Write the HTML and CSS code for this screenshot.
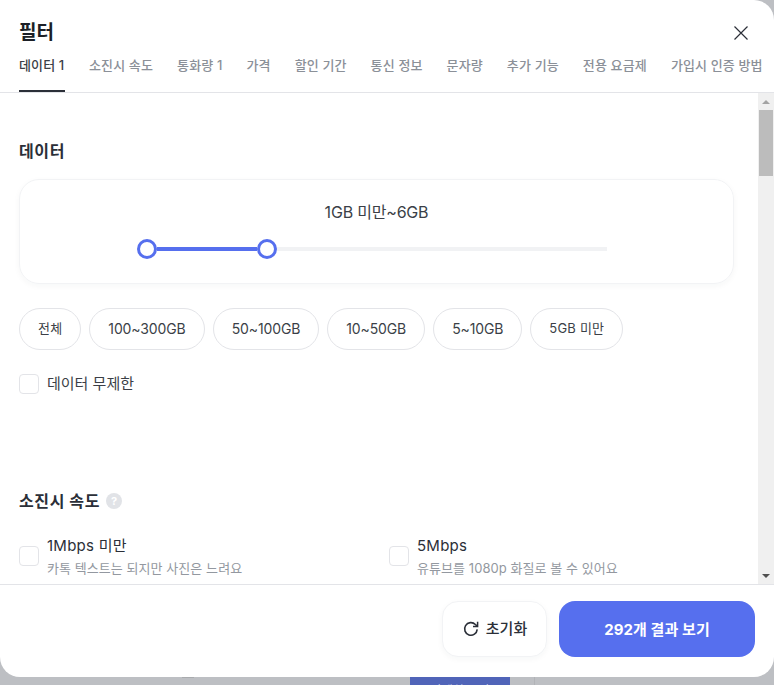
FILE: index.html
```html
<!DOCTYPE html>
<html lang="ko">
<head>
  <meta charset="UTF-8">
  <title>필터</title>
  <link rel="stylesheet" href="styles.css">
</head>
<body>
  <div class="modal">
    <header class="modal-head">
      <div class="title-row">
        <h1 class="title">필터</h1>
        <svg class="close" width="16" height="16" viewBox="0 0 16 16" fill="none" stroke="#2b2f38" stroke-width="1.2">
          <path d="M1.5 1.5L14.5 14.5M14.5 1.5L1.5 14.5"/>
        </svg>
      </div>
      <nav class="tabs">
        <span class="tab active">데이터 1</span>
        <span class="tab">소진시 속도</span>
        <span class="tab">통화량 1</span>
        <span class="tab">가격</span>
        <span class="tab">할인 기간</span>
        <span class="tab">통신 정보</span>
        <span class="tab">문자량</span>
        <span class="tab">추가 기능</span>
        <span class="tab">전용 요금제</span>
        <span class="tab">가입시 인증 방법</span>
      </nav>
    </header>

    <div class="body-wrap">
      <main class="content">
        <h2 class="section-title first">데이터</h2>
        <div class="range-card">
          <div class="range-label">1GB 미만~6GB</div>
          <div class="slider">
            <span class="knob"></span>
            <span class="fill"></span>
            <span class="knob"></span>
            <span class="rest"></span>
          </div>
        </div>
        <div class="chips">
          <span class="chip ko">전체</span>
          <span class="chip">100~300GB</span>
          <span class="chip">50~100GB</span>
          <span class="chip">10~50GB</span>
          <span class="chip">5~10GB</span>
          <span class="chip ko">5GB 미만</span>
        </div>
        <label class="check-row">
          <span class="box"></span>
          <span class="check-text">데이터 무제한</span>
        </label>

        <h2 class="section-title second">소진시 속도 <span class="help">?</span></h2>
        <div class="speed-grid">
          <div class="speed">
            <span class="box"></span>
            <div>
              <div class="speed-name">1Mbps 미만</div>
              <div class="speed-desc">카톡 텍스트는 되지만 사진은 느려요</div>
            </div>
          </div>
          <div class="speed">
            <span class="box"></span>
            <div>
              <div class="speed-name">5Mbps</div>
              <div class="speed-desc">유튜브를 1080p 화질로 볼 수 있어요</div>
            </div>
          </div>
        </div>
      </main>
      <div class="scrollbar">
        <span class="arrow up"></span>
        <span class="thumb"></span>
        <span class="track"></span>
        <span class="arrow down"></span>
      </div>
    </div>

    <footer class="modal-foot">
      <button class="btn-reset">
        <svg width="18" height="18" viewBox="0 0 18 18" fill="none" stroke="#2b2f38" stroke-width="1.6">
          <path d="M15.2 9.4A6.3 6.3 0 1 1 13.4 4.5L15.2 6.2"/>
          <path d="M15.6 1.8V6.4H11" stroke-width="1.5"/>
        </svg>
        <span class="reset-text">초기화</span>
      </button>
      <button class="btn-apply">292개 결과 보기</button>
    </footer>
  </div>

  <div class="behind">
    <span class="behind-mark"></span>
    <span class="behind-btn">자세히 보기</span>
  </div>
</body>
</html>
```

FILE: styles.css
```css
* {
  box-sizing: border-box;
}
html, body {
  height: 100%;
}
body {
  margin: 0;
  height: 685px;
  overflow: hidden;
  background-color: #bdbfc3;
  font-family: Inter, "Noto Sans CJK KR", sans-serif;
  color: #2b2f38;
}

/* Modal */
.modal {
  height: 677px;
  background-color: #fff;
  border-radius: 0 20px 20px 20px;
  display: flex;
  flex-direction: column;
  overflow: hidden;
}
.modal-head {
  height: 93px;
  flex: none;
  border-bottom: 1px solid #e3e4e8;
  padding: 0 12px 0 19px;
}
.title-row {
  display: flex;
  justify-content: space-between;
  align-items: center;
  padding: 14px 13px 0 0;
  height: 51px;
}
.title {
  margin: 0;
  font-size: 19px;
  line-height: 26px;
  font-weight: 700;
  color: #1c1f26;
}
.tabs {
  display: flex;
  gap: 24px;
  white-space: nowrap;
  font-size: 13px;
  letter-spacing: 0.13px;
  font-weight: 500;
  color: #8b9098;
}
.tab {
  height: 41px;
  padding-top: 3px;
  line-height: 22px;
}
.tab.active {
  min-width: 46px;
  color: #3b3f47;
  border-bottom: 2px solid #2b2f38;
}

/* Scroll area */
.body-wrap {
  flex: 1;
  min-height: 0;
  display: flex;
}
.content {
  flex: 1;
  min-width: 0;
  overflow: hidden;
  padding: 0 24px 0 19px;
}
.scrollbar {
  width: 16px;
  flex: none;
  display: flex;
  flex-direction: column;
  align-items: center;
  background-color: #f0f0f0;
}
.arrow {
  height: 17px;
  flex: none;
  display: flex;
  align-items: center;
}
.arrow::before {
  content: "";
  border-left: 4px solid transparent;
  border-right: 4px solid transparent;
}
.arrow.up::before {
  border-bottom: 4px solid #a3a3a3;
}
.arrow.down::before {
  border-top: 4px solid #505050;
}
.thumb {
  width: 14px;
  height: 66px;
  flex: none;
  background-color: #bcbcbc;
}
.track {
  flex: 1;
}

.section-title {
  margin: 0;
  font-size: 16px;
  letter-spacing: 0.6px;
  line-height: 24px;
  font-weight: 700;
  color: #2b2f38;
  display: flex;
  align-items: center;
  gap: 6px;
}
.section-title.first {
  padding-top: 46px;
  height: 70px;
}
.section-title.second {
  margin-top: 95px;
}
.help {
  width: 16px;
  height: 16px;
  border-radius: 50%;
  background-color: #e1e3e7;
  color: #fff;
  font-size: 11px;
  letter-spacing: 0;
  line-height: 16px;
  text-align: center;
}

.range-card {
  margin-top: 16px;
  height: 105px;
  border: 1px solid #f2f3f5;
  border-radius: 20px;
  box-shadow: 0 2px 6px rgba(30, 40, 60, 0.04);
  display: flex;
  flex-direction: column;
  align-items: center;
  padding-top: 21px;
}
.range-label {
  font-size: 16px;
  letter-spacing: -0.2px;
  line-height: 22px;
  color: #3b3f47;
}
.slider {
  margin: 16px 10px 0 0;
  width: 470px;
  display: flex;
  align-items: center;
}
.knob {
  width: 20px;
  height: 20px;
  flex: none;
  background-color: #fff;
  border: 3px solid #566fee;
  border-radius: 50%;
}
.fill {
  width: 100px;
  height: 4px;
  background-color: #566fee;
}
.rest {
  flex: 1;
  height: 4px;
  background-color: #f1f2f4;
}

.chips {
  margin-top: 24px;
  display: flex;
  gap: 8px;
}
.chip {
  height: 42px;
  padding: 0 18px;
  border: 1px solid #e3e4e8;
  border-radius: 21px;
  font-size: 14px;
  letter-spacing: -0.12px;
  line-height: 39px;
  color: #3b3f47;
  white-space: nowrap;
}
.chip.ko {
  font-size: 13px;
  letter-spacing: 0.2px;
}

.box {
  width: 20px;
  height: 20px;
  flex: none;
  border: 1px solid #e3e4e8;
  border-radius: 4px;
  background-color: #fff;
}
.check-row {
  margin-top: 24px;
  display: flex;
  align-items: center;
  gap: 8px;
}
.check-text {
  font-size: 15px;
  line-height: 18px;
  color: #3b3f47;
}

.speed-grid {
  margin-top: 20px;
  display: grid;
  grid-template-columns: 370px 1fr;
}
.speed {
  display: flex;
  align-items: center;
  gap: 8px;
}
.speed-name {
  font-size: 15px;
  letter-spacing: 0.25px;
  line-height: 24px;
  padding-top: 1px;
  color: #2b2f38;
}
.speed-desc {
  font-size: 13px;
  letter-spacing: 0.06px;
  line-height: 21px;
  color: #9398a0;
}

/* Footer */
.modal-foot {
  height: 93px;
  flex: none;
  border-top: 1px solid #e3e4e8;
  display: flex;
  justify-content: flex-end;
  gap: 12px;
  padding: 16px 19px 0 0;
}
button {
  font-family: inherit;
  border: 0;
  cursor: pointer;
  height: 56px;
}
.btn-reset {
  width: 105px;
  background-color: #fff;
  border: 1px solid #f2f3f5;
  border-radius: 16px;
  box-shadow: 0 2px 6px rgba(30, 40, 60, 0.04);
  display: flex;
  align-items: center;
  justify-content: center;
  gap: 6px;
  font-size: 15px;
  font-weight: 500;
  color: #2b2f38;
}
.reset-text {
  margin-bottom: 3px;
}
.btn-apply {
  width: 196px;
  padding-bottom: 3px;
  background-color: #566fee;
  border-radius: 16px;
  color: #fff;
  font-size: 15px;
  letter-spacing: 0.1px;
  font-weight: 700;
}

/* What shows under the modal */
.behind {
  height: 8px;
  overflow: hidden;
  position: relative;
}
.behind-mark {
  position: absolute;
  left: 182px;
  top: 0;
  width: 12px;
  height: 1px;
  background-color: #a9abae;
}
.behind-btn {
  position: absolute;
  left: 410px;
  top: 0;
  width: 100px;
  height: 24px;
  background-color: #5064b8;
  color: #c3c9e6;
  font-size: 12px;
  line-height: 28px;
  text-align: center;
}
.behind::after {
  content: "";
  position: absolute;
  left: 534px;
  top: 0;
  width: 1px;
  height: 8px;
  background-color: #b1b3b7;
}
```
